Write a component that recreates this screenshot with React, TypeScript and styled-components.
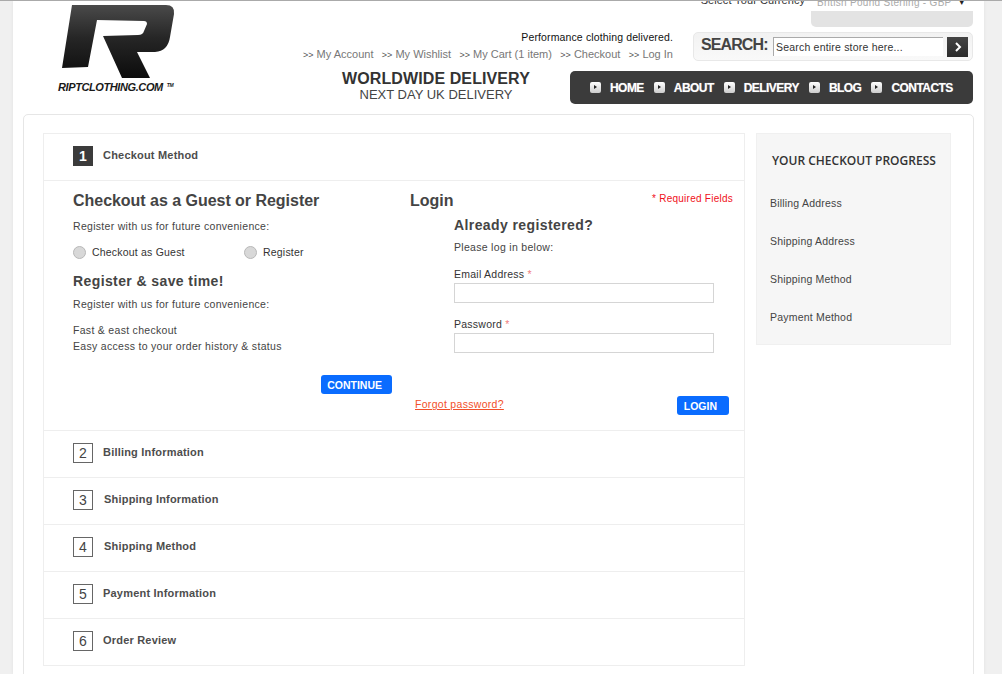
import React from 'react'
import styled, { createGlobalStyle } from 'styled-components'

const GlobalStyle = createGlobalStyle`
  html, body {
    margin: 0;
    padding: 0;
    height: 674px;
    overflow: hidden;
    background: #f0f0f0;
    font-family: 'Liberation Sans', Arial, sans-serif;
  }
`

const links = ['My Account', 'My Wishlist', 'My Cart (1 item)', 'Checkout', 'Log In']
const navItems = ['HOME', 'ABOUT', 'DELIVERY', 'BLOG', 'CONTACTS']
const steps = [
  { n: 2, title: 'Billing Information', offset: 0 },
  { n: 3, title: 'Shipping Information', offset: 1 },
  { n: 4, title: 'Shipping Method', offset: 1 },
  { n: 5, title: 'Payment Information', offset: 0 },
  { n: 6, title: 'Order Review', offset: 0 },
]
const progress = ['Billing Address', 'Shipping Address', 'Shipping Method', 'Payment Method']

const Logo = () => (
  <LogoBox>
    <svg width="130" height="80" viewBox="0 0 130 80">
      <defs>
        <linearGradient id="rGrad" x1="0" y1="0" x2="0" y2="1">
          <stop offset="0" stopColor="#4a4a4a" />
          <stop offset="0.45" stopColor="#262626" />
          <stop offset="1" stopColor="#0c0c0c" />
        </linearGradient>
      </defs>
      <path
        d="M24 4 L118 4 Q127 4 126 13 L122 36 Q120 50 107 51 L89 51 L102 77 L74 77 L55 35 L90 34 Q95 34 96 30 L99 23 Q99 20 96 20 L49 19 L40 66 L14 67 Z"
        fill="url(#rGrad)"
      />
    </svg>
    <LogoText>
      RIPTCLOTHING.COM<sup>TM</sup>
    </LogoText>
  </LogoBox>
)

export default function App() {
  return (
    <Page>
      <GlobalStyle />
      <Sheet>
        <Header>
          <Logo />
          <HeaderRight>
            <TopRow>
              <Account>
                <Tagline>Performance clothing delivered.</Tagline>
                <LinkRow>
                  {links.map((l) => (
                    <TopLink key={l}>
                      <i>&gt;&gt;</i> {l}
                    </TopLink>
                  ))}
                </LinkRow>
              </Account>
              <Tools>
                <CurrencyRow>
                  <CurrencyLabel>Select Your Currency</CurrencyLabel>
                  <CurrencyBox>
                    <CurrencySelect>
                      British Pound Sterling - GBP
                      <span>▼</span>
                    </CurrencySelect>
                  </CurrencyBox>
                </CurrencyRow>
                <SearchBox>
                  <SearchLabel>SEARCH:</SearchLabel>
                  <SearchInput placeholder="Search entire store here..." />
                  <SearchButton aria-label="Search">
                    <svg width="8" height="10" viewBox="0 0 8 10">
                      <path d="M2 1 L6 5 L2 9" fill="none" stroke="#fff" strokeWidth="2" />
                    </svg>
                  </SearchButton>
                </SearchBox>
              </Tools>
            </TopRow>
            <BottomRow>
              <Delivery>
                <strong>WORLDWIDE DELIVERY</strong>
                <span>NEXT DAY UK DELIVERY</span>
              </Delivery>
              <Nav>
                {navItems.map((item) => (
                  <NavItem key={item}>
                    <NavIcon />
                    {item}
                  </NavItem>
                ))}
              </Nav>
            </BottomRow>
          </HeaderRight>
        </Header>

        <Card>
          <Accordion>
            <StepHead>
              <StepNumber $active>1</StepNumber>
              <StepTitle>Checkout Method</StepTitle>
            </StepHead>
            <StepBody>
              <Guest>
                <H2>Checkout as a Guest or Register</H2>
                <Copy>Register with us for future convenience:</Copy>
                <RadioRow>
                  <RadioLabel $width={171}>
                    <Radio />
                    Checkout as Guest
                  </RadioLabel>
                  <RadioLabel>
                    <Radio />
                    Register
                  </RadioLabel>
                </RadioRow>
                <H3>Register &amp; save time!</H3>
                <Copy>Register with us for future convenience:</Copy>
                <Benefits>
                  <li>Fast &amp; east checkout</li>
                  <li>Easy access to your order history &amp; status</li>
                </Benefits>
                <ContinueRow>
                  <BlueButton>CONTINUE</BlueButton>
                </ContinueRow>
              </Guest>
              <LoginCol>
                <LoginHead>
                  <H2>Login</H2>
                  <Required>* Required Fields</Required>
                </LoginHead>
                <LoginForm>
                  <H3Tight>Already registered?</H3Tight>
                  <Copy>Please log in below:</Copy>
                  <Field>
                    <FieldLabel>
                      Email Address <em>*</em>
                    </FieldLabel>
                    <TextInput />
                  </Field>
                  <Field>
                    <FieldLabel>
                      Password <em>*</em>
                    </FieldLabel>
                    <TextInput type="password" />
                  </Field>
                </LoginForm>
                <LoginActions>
                  <Forgot href="#">Forgot password?</Forgot>
                  <LoginButton>LOGIN</LoginButton>
                </LoginActions>
              </LoginCol>
            </StepBody>
            {steps.map((s) => (
              <StepHead key={s.n}>
                <StepNumber>{s.n}</StepNumber>
                <StepTitle $offset={s.offset}>{s.title}</StepTitle>
              </StepHead>
            ))}
          </Accordion>
          <Sidebar>
            <SidebarTitle>YOUR CHECKOUT PROGRESS</SidebarTitle>
            {progress.map((p) => (
              <SidebarItem key={p}>{p}</SidebarItem>
            ))}
          </Sidebar>
        </Card>
      </Sheet>
    </Page>
  )
}

const Page = styled.div`
  width: 1002px;
  height: 674px;
  box-sizing: border-box;
  overflow: hidden;
  border-top: 1px solid #aaa;
  background: #f0f0f0;
`

const Sheet = styled.div`
  width: 971px;
  height: 673px;
  margin-left: 13px;
  background: #fff;
  box-shadow: 0 0 3px #e0e0e0;
`

const Header = styled.header`
  display: flex;
  height: 113px;
  padding-right: 11px;
  box-sizing: border-box;
`

const LogoBox = styled.div`
  width: 287px;
  flex: none;
  padding-left: 35px;
  box-sizing: border-box;

  svg {
    display: block;
  }
`

const LogoText = styled.div`
  margin: -1px 0 0 10px;
  font-size: 11px;
  font-weight: bold;
  font-style: italic;
  line-height: 14px;
  letter-spacing: -0.4px;
  color: #1a1a1a;
  white-space: nowrap;

  sup {
    font-size: 5px;
    margin-left: 4px;
    vertical-align: 4px;
    line-height: 0;
  }
`

const HeaderRight = styled.div`
  flex: 1;
  display: flex;
  flex-direction: column;
`

const TopRow = styled.div`
  display: flex;
  justify-content: space-between;
  height: 70px;
`

const Account = styled.div`
  width: 373px;
  padding-top: 30px;
  box-sizing: border-box;
`

const Tagline = styled.div`
  text-align: right;
  font-size: 10.5px;
  line-height: 13px;
  letter-spacing: 0.13px;
  color: #111;
`

const LinkRow = styled.div`
  display: flex;
  justify-content: space-between;
  width: 370px;
  margin: 4px 0 0 3px;
`

const TopLink = styled.a`
  font-size: 11px;
  line-height: 13px;
  color: #777;
  white-space: nowrap;

  i {
    font-style: normal;
    font-size: 9px;
    color: #555;
  }
`

const Tools = styled.div`
  width: 280px;
  display: flex;
  flex-direction: column;
  align-items: stretch;
`

const CurrencyRow = styled.div`
  display: flex;
  justify-content: flex-end;
  height: 32px;
  margin-top: -1px;
  overflow: hidden;
`

const CurrencyLabel = styled.div`
  margin: -6px 6px 0 0;
  font-size: 11px;
  line-height: 13px;
  letter-spacing: 0.05px;
  color: #333;
  white-space: nowrap;
`

const CurrencyBox = styled.div`
  width: 162px;
  height: 27px;
  background: #e3e3e3;
  border-radius: 0 0 5px 5px;
`

const CurrencySelect = styled.div`
  display: flex;
  justify-content: space-between;
  height: 11px;
  padding: 0 7px 0 6px;
  background: #fff;
  font-size: 10px;
  line-height: 5px;
  letter-spacing: 0.3px;
  color: #aaa;
  overflow: hidden;

  span {
    color: #222;
    font-size: 8px;
  }
`

const SearchBox = styled.div`
  display: flex;
  align-items: flex-start;
  height: 29px;
  padding: 4px 4px 0 7px;
  box-sizing: border-box;
  background: linear-gradient(#f2f2f2, #f9f9f9);
  border: 1px solid #e8e8e8;
  border-radius: 5px;
`

const SearchLabel = styled.div`
  font-size: 16px;
  font-weight: bold;
  line-height: 16px;
  letter-spacing: -0.9px;
  color: #444;
  width: 72px;
  flex: none;
`

const SearchInput = styled.input`
  width: 170px;
  height: 19px;
  flex: none;
  box-sizing: border-box;
  padding: 0 2px;
  background: #fff;
  border: none;
  border-top: 1px solid #aaa;
  border-left: 1px solid #aaa;
  outline: none;
  font-family: inherit;
  font-size: 10.5px;
  letter-spacing: 0.2px;

  &::placeholder {
    color: #333;
    opacity: 1;
  }
`

const SearchButton = styled.button`
  width: 21px;
  height: 20px;
  flex: none;
  margin-left: 4px;
  padding: 0;
  display: flex;
  align-items: center;
  justify-content: center;
  background: linear-gradient(#444, #2c2c2c);
  border: none;
`

const BottomRow = styled.div`
  display: flex;
  justify-content: space-between;
  align-items: flex-start;
  padding-left: 5px;
`

const Delivery = styled.div`
  width: 262px;
  flex: none;
  margin-top: -1px;
  display: flex;
  flex-direction: column;
  align-items: center;
  color: #333;

  strong {
    font-size: 16px;
    line-height: 18px;
    letter-spacing: 0.1px;
  }

  span {
    font-size: 13px;
    line-height: 14px;
    color: #444;
  }
`

const Nav = styled.nav`
  width: 403px;
  height: 33px;
  flex: none;
  box-sizing: border-box;
  padding-left: 20px;
  display: flex;
  align-items: center;
  background: #3b3b3b;
  border-radius: 5px;
`

const NavItem = styled.a`
  display: flex;
  align-items: center;
  margin-right: 10px;
  font-size: 12px;
  font-weight: bold;
  letter-spacing: -0.55px;
  color: #fff;
  text-shadow: 0 0 1px rgba(255, 255, 255, 0.5);
`

const NavIcon = styled.span`
  position: relative;
  width: 11px;
  height: 11px;
  margin-right: 9px;
  background: linear-gradient(#fff, #ccc);
  border-radius: 2px;

  &::after {
    content: '';
    position: absolute;
    left: 4px;
    top: 3px;
    border-left: 3px solid #222;
    border-top: 2.5px solid transparent;
    border-bottom: 2.5px solid transparent;
  }
`

const Card = styled.main`
  display: flex;
  align-items: flex-start;
  margin-left: 10px;
  width: 951px;
  height: 600px;
  box-sizing: border-box;
  padding: 18px 0 0 19px;
  border: 1px solid #e6e6e6;
  border-radius: 5px;
`

const Accordion = styled.section`
  width: 702px;
  flex: none;
  box-sizing: border-box;
  border: 1px solid #eee;
`

const StepHead = styled.div`
  display: flex;
  align-items: flex-start;
  height: 47px;
  box-sizing: border-box;
  padding: 12px 0 0 29px;
  border-bottom: 1px solid #eee;

  &:last-child {
    height: 46px;
    border-bottom: none;
  }
`

const StepNumber = styled.div<{ $active?: boolean }>`
  width: 20px;
  height: 20px;
  flex: none;
  box-sizing: border-box;
  display: flex;
  align-items: center;
  justify-content: center;
  font-size: 14px;
  font-weight: ${(p) => (p.$active ? 'bold' : 'normal')};
  color: ${(p) => (p.$active ? '#fff' : '#444')};
  background: ${(p) => (p.$active ? '#3b3b3b' : '#fff')};
  border: 1px solid ${(p) => (p.$active ? '#3b3b3b' : '#666')};
`

const StepTitle = styled.div<{ $offset?: number }>`
  margin: 3px 0 0 ${(p) => 10 + (p.$offset || 0)}px;
  font-size: 11px;
  font-weight: bold;
  line-height: 13px;
  letter-spacing: 0.2px;
  color: #4d4d4d;
`

const StepBody = styled.div`
  display: flex;
  height: 250px;
  box-sizing: border-box;
  padding: 11px 0 0 29px;
  border-bottom: 1px solid #eee;
`

const Guest = styled.div`
  width: 337px;
  flex: none;
`

const H2 = styled.h2`
  margin: 0;
  font-size: 16px;
  line-height: 18px;
  font-weight: bold;
  letter-spacing: -0.03px;
  color: #444;
`

const H3 = styled.h3`
  margin: 14px 0 -1px;
  font-size: 14px;
  line-height: 16px;
  font-weight: bold;
  letter-spacing: 0.4px;
  color: #444;
`

const H3Tight = styled(H3)`
  margin: 0 0 -2px;
`

const Copy = styled.p`
  margin: 10px 0 0;
  font-size: 10.5px;
  line-height: 13px;
  letter-spacing: 0.3px;
  color: #444;
`

const RadioRow = styled.div`
  display: flex;
  margin-top: 13px;
`

const RadioLabel = styled.label<{ $width?: number }>`
  display: flex;
  align-items: center;
  width: ${(p) => (p.$width ? `${p.$width}px` : 'auto')};
  font-size: 10.5px;
  line-height: 13px;
  letter-spacing: 0.2px;
  color: #333;
`

const Radio = styled.span`
  width: 13px;
  height: 13px;
  margin-right: 6px;
  box-sizing: border-box;
  border-radius: 50%;
  background: #d8d8d8;
  border: 1px solid #b8b8b8;
`

const Benefits = styled.ul`
  margin: 11px 0 0;
  padding: 0;
  list-style: none;
  font-size: 10.5px;
  line-height: 16px;
  letter-spacing: 0.3px;
  color: #444;
`

const ContinueRow = styled.div`
  display: flex;
  justify-content: flex-end;
  width: 319px;
  margin-top: 21px;
`

const BlueButton = styled.button`
  height: 19px;
  padding: 0 10px 0 6px;
  background: #0a6cff;
  border: none;
  border-radius: 3px;
  font-family: inherit;
  font-size: 10.5px;
  font-weight: bold;
  color: #fff;
`

const LoginButton = styled(BlueButton)`
  padding: 0 12px 0 7px;
`

const LoginCol = styled.div`
  width: 323px;
  flex: none;
`

const LoginHead = styled.div`
  display: flex;
  justify-content: space-between;
  align-items: flex-start;
`

const Required = styled.div`
  font-size: 10px;
  line-height: 13px;
  letter-spacing: 0.25px;
  color: #f01020;
`

const LoginForm = styled.div`
  margin: 7px 0 0 44px;
`

const Field = styled.div`
  margin-top: 14px;

  & + & {
    margin-top: 15px;
  }
`

const FieldLabel = styled.div`
  margin-bottom: 2px;
  font-size: 10.5px;
  line-height: 13px;
  letter-spacing: 0.25px;
  color: #333;

  em {
    font-style: normal;
    color: #f08080;
  }
`

const TextInput = styled.input`
  display: block;
  width: 260px;
  height: 20px;
  box-sizing: border-box;
  border: 1px solid #d5d5d5;
  outline: none;
`

const LoginActions = styled.div`
  display: flex;
  justify-content: space-between;
  align-items: flex-start;
  margin: 43px 0 0 5px;
  width: 314px;
`

const Forgot = styled.a`
  margin-top: 2px;
  font-size: 10.5px;
  line-height: 13px;
  letter-spacing: 0.3px;
  color: #f2502a;
`

const Sidebar = styled.aside`
  width: 195px;
  height: 212px;
  flex: none;
  margin-left: 11px;
  box-sizing: border-box;
  padding: 20px 13px 0;
  background: #f6f6f6;
  border: 1px solid #f0f0f0;
`

const SidebarTitle = styled.h4`
  margin: 0 0 29px 2px;
  font-family: 'Open Sans', sans-serif;
  font-size: 12px;
  line-height: 14px;
  font-weight: 600;
  white-space: nowrap;
  color: #333;
`

const SidebarItem = styled.div`
  height: 38px;
  font-size: 10.5px;
  line-height: 13px;
  letter-spacing: 0.2px;
  color: #444;
`
